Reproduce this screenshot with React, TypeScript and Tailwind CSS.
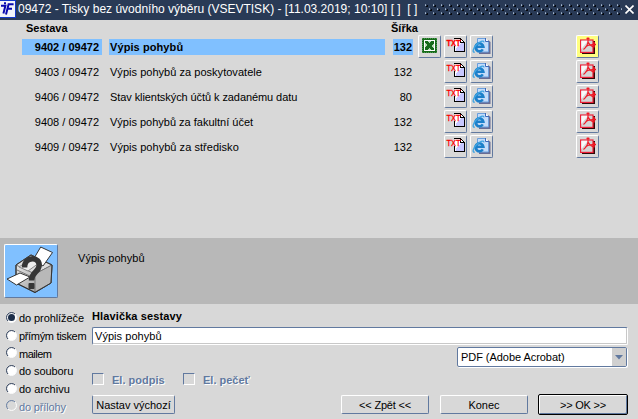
import type { ReactNode } from "react";

const ROWS = [
  { code: "9402 / 09472", name: "Výpis pohybů", width: 132, active: true, tracking: "tracking-[0.09px]" },
  { code: "9403 / 09472", name: "Výpis pohybů za poskytovatele", width: 132, tracking: "tracking-[0.03px]" },
  { code: "9406 / 09472", name: "Stav klientských účtů k zadanému datu", width: 80, tracking: "tracking-[-0.08px]" },
  { code: "9408 / 09472", name: "Výpis pohybů za fakultní účet", width: 132, tracking: "tracking-normal" },
  { code: "9409 / 09472", name: "Výpis pohybů za středisko", width: 132, tracking: "tracking-[0.04px]" },
];

const TARGETS = [
  { label: "do prohlížeče", checked: true, tracking: "tracking-[-0.08px]" },
  { label: "přímým tiskem", tracking: "tracking-[-0.33px]" },
  { label: "mailem", tracking: "tracking-[-0.5px]" },
  { label: "do souboru", tracking: "tracking-[-0.08px]" },
  { label: "do archivu", tracking: "tracking-normal" },
  { label: "do přílohy", disabled: true, tracking: "tracking-[-0.15px]" },
];

function AppLogo() {
  return (
    <svg width="16" height="18" viewBox="0 0 16 18" className="shrink-0">
      <rect width="16" height="18" fill="#1238c8" />
      <rect x="0" y="1" width="15" height="16" fill="#f2f4fa" />
      <path d="M4 3.2H6M1 5.7H5.4L3.4 13.5M13.6 4.2H8.6L6 14.5M7.4 8.8H12" fill="none" stroke="#0808b0" strokeWidth="2" />
    </svg>
  );
}

function Grip() {
  return (
    <svg width="197" height="13" className="shrink-0" shapeRendering="crispEdges">
      <defs>
        <pattern id="grip" width="8" height="8" patternUnits="userSpaceOnUse">
          <rect x="0" y="1" width="1" height="1" fill="#a9b8ca" />
          <rect x="1" y="2" width="2" height="1" fill="#05070c" />
          <rect x="2" y="1" width="1" height="1" fill="#05070c" />
          <rect x="0" y="0" width="1" height="1" fill="#8496ae" />
          <rect x="4" y="5" width="1" height="1" fill="#a9b8ca" />
          <rect x="5" y="6" width="2" height="1" fill="#05070c" />
          <rect x="6" y="5" width="1" height="1" fill="#05070c" />
          <rect x="4" y="4" width="1" height="1" fill="#8496ae" />
        </pattern>
      </defs>
      <rect width="197" height="12" fill="url(#grip)" />
    </svg>
  );
}

function ToolButton({ children, active }: { children: ReactNode; active?: boolean }) {
  return (
    <button
      className={`flex h-[23px] w-[23px] shrink-0 items-center justify-center rounded-[2px] border border-t-white border-l-white border-r-[#61799f] border-b-[#61799f] ${active ? "bg-[#ffff80]" : "bg-[#d8d8d8]"}`}
    >
      {children}
    </button>
  );
}

function ExcelIcon() {
  return (
    <svg width="21" height="21" viewBox="0 0 21 21" shapeRendering="crispEdges" className="shrink-0">
      <rect x="3" y="2" width="15" height="15" fill="#176b1b" />
      <rect x="5" y="4" width="11" height="11" fill="#fff" />
      <rect x="6" y="5" width="9" height="9" fill="#b9d8b5" />
      <path d="M6 5H9L15 13V14H12L6 6ZM12 5H15V7L9 14H6V12Z" fill="#176b1b" />
      <path d="M3.5 2V17M17.5 2V17M3 2.5H18M3 16.5H18" stroke="#4c954d" strokeDasharray="1 1" />
    </svg>
  );
}

function TxtIcon() {
  return (
    <svg width="21" height="21" viewBox="0 0 21 21" shapeRendering="crispEdges" className="shrink-0">
      <path d="M9.5 2.5H15.5L19.5 6.5V15.5H9.5Z" fill="#fff" />
      <path d="M11 15V12L14 9L16 7H19V15Z" fill="#c8c8ff" />
      <path d="M9.5 9.5V15.5H19.5V6.5L15.5 2.5H8.5" fill="none" stroke="#000" />
      <path d="M15.5 2.5V6.5H19.5" fill="none" stroke="#000" />
      <text
        x="1.5"
        y="10"
        textLength="14"
        lengthAdjust="spacingAndGlyphs"
        fill="#ff0000"
        stroke="#ff0000"
        strokeWidth="0.3"
        className="font-['Liberation_Sans',sans-serif] text-[9px]"
      >
        TXT
      </text>
    </svg>
  );
}

function BrowserIcon() {
  return (
    <svg width="21" height="21" viewBox="0 0 21 21" className="shrink-0">
      <path d="M8 4H17L19.5 6V18H8Z" fill="#686c94" />
      <path d="M6.5 2.5H14.5L17.5 5.5V16H6.5Z" fill="#c4dcfa" stroke="#6b9fdc" />
      <path d="M14.5 2V5.5H18" fill="#fff" stroke="#3c68b8" />
      <path d="M5 10.8H12.4A4 4 0 1 0 11.8 13.4" fill="none" stroke="#1c80ca" strokeWidth="2.6" />
      <path d="M3.8 16C1 17 2 12.5 5.2 9C8.5 5.4 13 3.8 12.8 6.4" fill="none" stroke="#3fa4e2" strokeWidth="1.4" />
    </svg>
  );
}

function PdfIcon() {
  return (
    <svg width="21" height="21" viewBox="0 0 21 21" className="shrink-0">
      <path d="M5 5H18V18H5Z" fill="#300808" />
      <rect x="3.6" y="4" width="12.4" height="12.4" fill="#d4d4d4" stroke="#ee2038" strokeWidth="1.2" />
      <path d="M4.3 4.8H11L4.3 13Z" fill="#f9f9f9" />
      <path d="M11 1.5V5C11 8 9 11.5 6.5 13.5M11 6C12 8.5 14 10 16.5 11M8.5 11C10 9.4 13 8.6 16 8.6" fill="none" stroke="#f01824" strokeWidth="1.1" />
      <path d="M9.5 2.5H12.5M17 6V11.5M15.5 8.5H19" fill="none" stroke="#f01824" strokeWidth="1.6" />
    </svg>
  );
}

function PrinterIcon() {
  return (
    <svg width="52" height="52" viewBox="0 0 52 52">
      <defs>
        <linearGradient id="body" x1="0" y1="0" x2="1" y2="1">
          <stop offset="0" stopColor="#f4f4f4" />
          <stop offset="1" stopColor="#8d8d8d" />
        </linearGradient>
      </defs>
      <g stroke="#343434" strokeWidth="1" strokeLinejoin="round">
        <path d="M11 20L26 10L47 20L46 38L30 47.5L11 38Z" fill="url(#body)" />
        <path d="M11 20L26 10L47 20L30 29Z" fill="#dedede" stroke="#777" />
        <path d="M30 29V47L46 38L47 20Z" fill="#b8b8b8" stroke="#777" />
        <path d="M11 20L26 10L47 20L46 38L30 47.5L11 38Z" fill="none" />
        <path d="M28 15L35.7 2L47.5 7.5L38 21Z" fill="#fff" />
        <path d="M14 22L26 14L34 18L23 26Z" fill="#eee" stroke="#888" />
        <path d="M2 34L15 28L25 32L11.5 40Z" fill="#fff" />
        <path d="M12 25L27 32" fill="none" stroke="#777" />
      </g>
      <path d="M19.5 22.5C19.5 10.5 36 11.5 34 21.5C33 27.5 26.5 27 26.5 35.5" fill="none" stroke="#363636" strokeWidth="5.5" />
      <rect x="23.5" y="38" width="6" height="6" rx="1" fill="#363636" />
    </svg>
  );
}

function Radio({ checked, disabled }: { checked?: boolean; disabled?: boolean }) {
  return (
    <svg width="12" height="12" viewBox="0 0 12 12" className="shrink-0">
      <circle cx="5.5" cy="5.5" r="4.8" fill={disabled ? "#d8d8d8" : "#fff"} />
      <path d="M2 9A4.9 4.9 0 0 1 9 2" fill="none" stroke={disabled ? "#61799f" : "#293a56"} strokeWidth="1" />
      <path d="M9 2A4.9 4.9 0 0 1 2 9" fill="none" stroke="#fff" strokeWidth="1" />
      {checked && <circle cx="5.5" cy="5.5" r="3.5" fill="#1c2e4a" />}
    </svg>
  );
}

function PushButton({ children, className }: { children: ReactNode; className: string }) {
  return (
    <button className={`flex shrink-0 items-center justify-center rounded-[2px] bg-[#d8d8d8] whitespace-pre ${className}`}>
      {children}
    </button>
  );
}

const BEVEL = "border border-t-white border-l-white border-r-[#61799f] border-b-[#61799f]";

export default function App() {
  return (
    <div className="flex h-[419px] w-[638px] flex-col overflow-hidden bg-[#d8d8d8] font-['Liberation_Sans',Arial,sans-serif] text-[11px] leading-[14px] text-black">
      <header className="flex h-5 shrink-0 items-start bg-[#293a56] text-white">
        <AppLogo />
        <h1 className="ml-0.5 w-[407px] shrink-0 pt-px text-[12px] leading-4 whitespace-pre">
          09472 - Tisky bez úvodního výběru (VSEVTISK) - [11.03.2019; 10:10] [ ]  [ ]
        </h1>
        <div className="shrink-0 pt-1">
          <Grip />
        </div>
        <svg width="9" height="9" viewBox="0 0 9 9" className="mt-[5px] ml-[3px] shrink-0">
          <path d="M0.5 0.5L8.5 8.5M8.5 0.5L0.5 8.5" stroke="#fff" strokeWidth="1.6" />
        </svg>
      </header>

      <main className="flex h-[218px] shrink-0 flex-col">
        <div className="flex h-[14px] pt-px pl-[26px] font-bold">
          <span className="w-[365px]">Sestava</span>
          <span>Šířka</span>
        </div>
        {ROWS.map((row) => (
          <div key={row.code} className={`flex h-[25px] shrink-0 items-center pl-[22px] ${row.active ? "font-bold" : ""}`}>
            <div className={`h-4 w-20 pr-[3px] text-right leading-4 ${row.active ? "bg-[#80c0ff]" : ""}`}>{row.code}</div>
            <div className={`ml-[7px] h-4 w-[276px] pl-px leading-4 ${row.tracking} ${row.active ? "bg-[#80c0ff]" : ""}`}>{row.name}</div>
            <div className={`ml-2 h-4 w-5 pr-px text-right leading-4 ${row.active ? "bg-[#80c0ff]" : ""}`}>{row.width}</div>
            <div className="ml-[5px] flex w-[158px] gap-[3px]">
              {row.active ? (
                <ToolButton>
                  <ExcelIcon />
                </ToolButton>
              ) : (
                <div className="w-[23px]" />
              )}
              <ToolButton>
                <TxtIcon />
              </ToolButton>
              <ToolButton>
                <BrowserIcon />
              </ToolButton>
            </div>
            <ToolButton active={row.active}>
              <PdfIcon />
            </ToolButton>
          </div>
        ))}
      </main>

      <section className="flex h-[66px] shrink-0 items-start bg-[#b8b8b8] pt-[6px] pl-1">
        <div className={`flex h-[54px] w-[54px] items-center justify-center rounded-[2px] bg-[#80c0ff] ${BEVEL}`}>
          <PrinterIcon />
        </div>
        <p className="mt-[7px] ml-5 tracking-[0.05px]">Výpis pohybů</p>
      </section>

      <footer className="flex min-h-0 flex-1">
        <div className="flex w-[92px] shrink-0 flex-col pt-[5px] pl-[6px]">
          {TARGETS.map((t) => (
            <label key={t.label} className={`flex h-[17.7px] items-center gap-px whitespace-nowrap ${t.disabled ? "text-[#61799f] [text-shadow:1px_1px_0_#fff]" : ""}`}>
              <Radio checked={t.checked} disabled={t.disabled} />
              <span className={`pt-px ${t.tracking}`}>{t.label}</span>
            </label>
          ))}
        </div>
        <div className="flex w-[536px] flex-col">
          <h2 className="h-[22px] pt-[5px] font-bold tracking-[0.12px]">Hlavička sestavy</h2>
          <div className="mt-px h-[18px] shrink-0 rounded-[2px] border border-t-[#61799f] border-l-[#61799f] border-r-white border-b-white bg-white pl-[2px] leading-[17px] tracking-[0.05px] shadow-[inset_0_-1px_0_#c8c8c8,inset_-1px_0_0_#c8c8c8]">
            Výpis pohybů
          </div>
          <div className="mt-[2px] mr-px flex h-5 w-[170px] shrink-0 items-center justify-between self-end rounded-[2px] border border-[#61799f] bg-white pl-[3px] shadow-[1px_1px_0_#fff]">
            <span className="tracking-[-0.05px]">PDF (Adobe Acrobat)</span>
            <span className="flex h-[18px] w-[14px] items-center justify-center bg-[#d0d0d0]">
              <svg width="8" height="5">
                <path d="M0 0H8L4 4.5Z" fill="#61799f" />
              </svg>
            </span>
          </div>
          <div className="mt-[6px] flex h-[14px] shrink-0 items-center font-bold text-[#61799f] [text-shadow:1px_1px_0_#fff]">
            <span className="mb-[3px] h-3 w-3 border border-t-[#61799f] border-l-[#61799f] border-r-white border-b-white" />
            <span className="ml-2 w-[71px]">El. podpis</span>
            <span className="mb-[3px] h-3 w-3 border border-t-[#61799f] border-l-[#61799f] border-r-white border-b-white" />
            <span className="ml-2">El. pečeť</span>
          </div>
          <div className="mt-[7px] flex items-center">
            <PushButton className="mr-[166px] h-[19px] w-[83px] border border-t-white border-l-[#61799f] border-r-[#61799f] border-b-[#61799f]">Nastav výchozí</PushButton>
            <PushButton className="mr-[11px] h-[19px] w-[88px] border border-t-white border-l-white border-r-[#61799f] border-b-[#61799f] tracking-[-0.2px]">{"<< Zpět <<"}</PushButton>
            <PushButton className="mr-[10px] h-[19px] w-[88px] border border-t-white border-l-white border-r-[#61799f] border-b-[#61799f]">Konec</PushButton>
            <PushButton className="h-[21px] w-[90px] border border-black tracking-[-0.2px] shadow-[inset_1px_1px_0_#fff,inset_-1px_-1px_0_#61799f]">{">> OK >>"}</PushButton>
          </div>
        </div>
      </footer>
    </div>
  );
}
